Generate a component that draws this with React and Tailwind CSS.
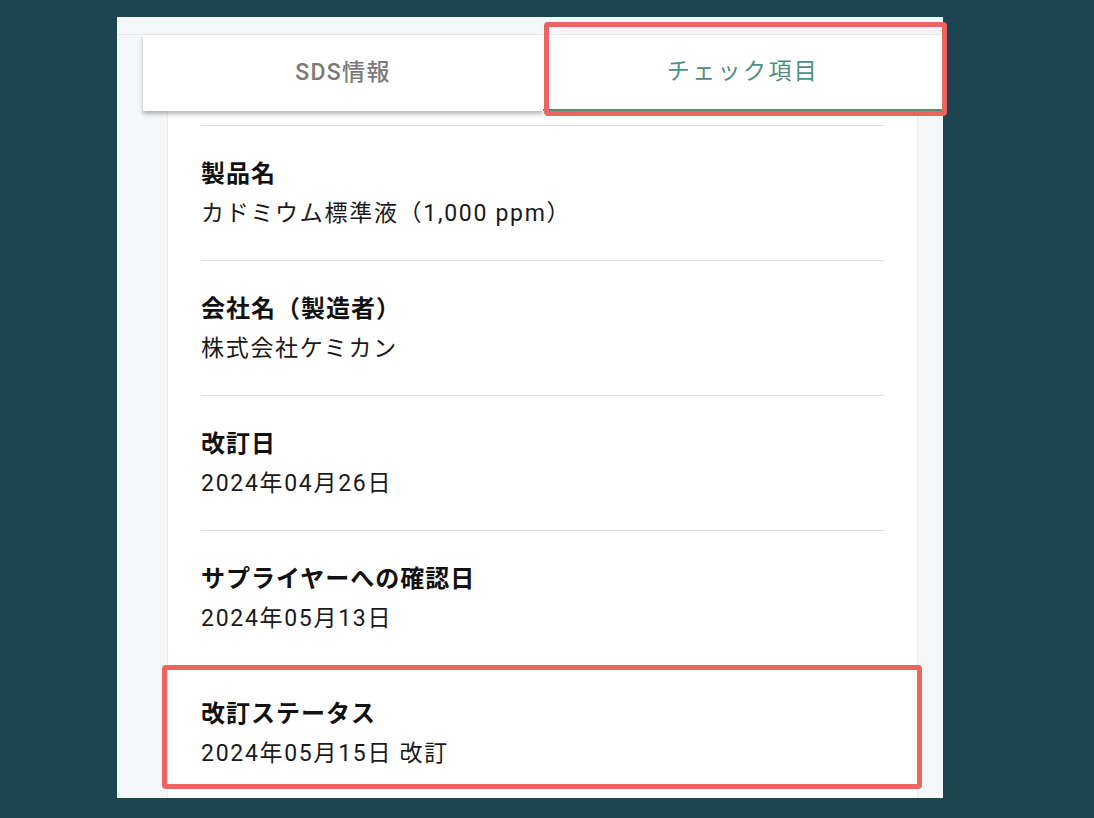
import React from "react";

const rows = [
  { label: "製品名", value: "カドミウム標準液（1,000 ppm）" },
  { label: "会社名（製造者）", value: "株式会社ケミカン" },
  { label: "改訂日", value: "2024年04月26日" },
  { label: "サプライヤーへの確認日", value: "2024年05月13日" },
  { label: "改訂ステータス", value: "2024年05月15日 改訂" },
];

export default function App() {
  return (
    <div
      className="relative w-[1094px] h-[818px] bg-[#1c4451] pl-[117px] pt-[17px] overflow-hidden"
      style={{ fontFamily: 'Roboto, "Noto Sans CJK JP", sans-serif' }}
    >
      <div className="w-[826px] h-[781px] bg-[#f5f6f8] flex flex-col overflow-hidden">
        <div className="h-[18px] shrink-0 border-b border-[#e6e7ea]" />
        <div className="relative z-10 ml-[26px] flex h-[76px] shrink-0">
          <div className="w-[400px] bg-white shadow-[0_3px_4px_rgba(0,0,0,0.28)] flex items-center justify-center text-[23px] tracking-[1.3px] font-medium text-[#7a7a7a]">
            SDS情報
          </div>
          <div className="w-[400px] bg-white border-b-2 border-[#4b8d7f] flex items-center justify-center text-[23px] tracking-[2.4px] text-[#4f8e83]">
            チェック項目
          </div>
        </div>
        <div className="ml-[50px] w-[751px] flex-1 bg-white border-x border-[#ececee] px-[33px] pt-[14px]">
          {rows.map((r) => (
            <div key={r.label} className="border-t border-[#dedede]">
              <div className="pt-[32px] pb-[30px] flex flex-col gap-[8px]">
                <div className="text-[24px] leading-[32px] tracking-[1px] font-bold text-[#111111]">
                  {r.label}
                </div>
                <div className="text-[23px] leading-[32px] tracking-[1.7px] text-[#1a1a1a]">
                  {r.value}
                </div>
              </div>
            </div>
          ))}
        </div>
      </div>
      <div className="absolute left-[544px] top-[22px] w-[403px] h-[94px] border-[5px] border-[#ec6560] rounded-[4px] z-20" />
      <div className="absolute left-[162px] top-[665px] w-[760px] h-[124px] border-[5px] border-[#ec6560] rounded-[4px] z-20" />
    </div>
  );
}
